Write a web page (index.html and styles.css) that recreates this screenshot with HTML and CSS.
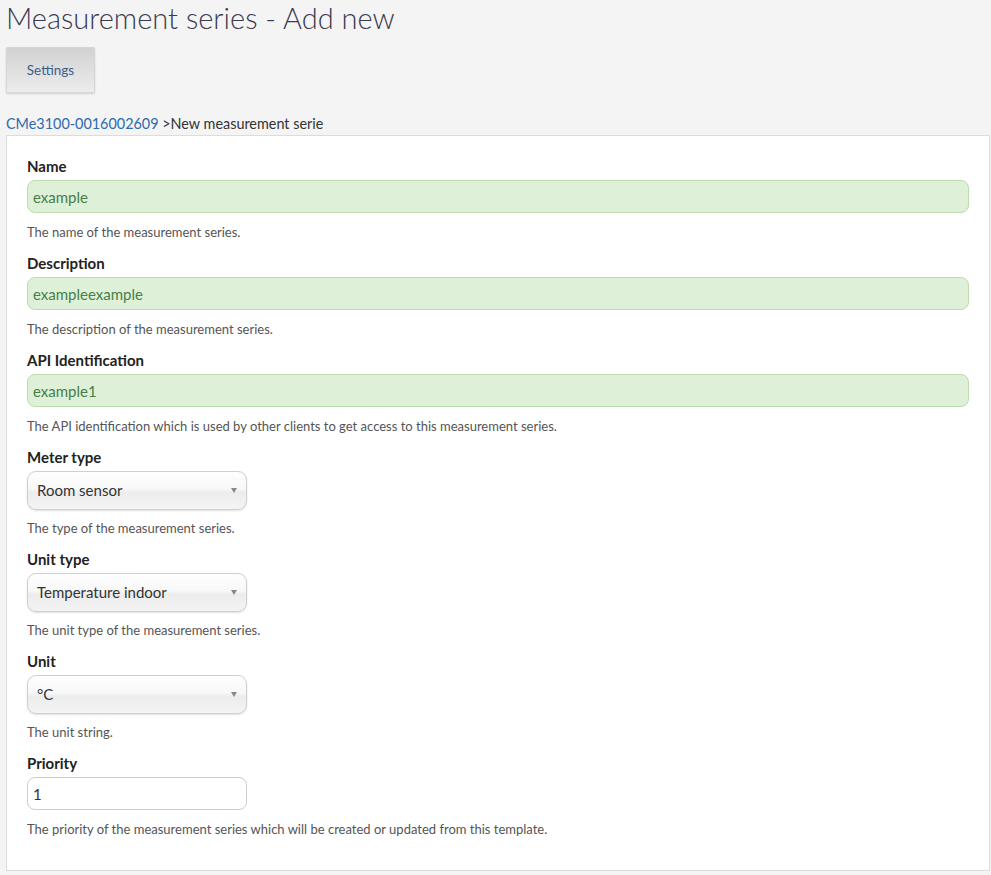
FILE: index.html
```html
<!DOCTYPE html>
<html>
<head>
    <title>Measurement series - Add new</title>
    <meta charset="utf-8">
    <meta name="viewport" content="width=device-width, initial-scale=1">
    <link rel="stylesheet" href="styles.css">
</head>
<body>
    <h1 class="page-title">Measurement series - Add new</h1>
    <div class="toolbar">
        <button class="tool-button">Settings</button>
    </div>
    <div class="breadcrumb">
        <a href="#">CMe3100-0016002609</a> &gt;New measurement serie
    </div>
    <div class="panel">
        <div class="field">
            <label class="field-label">Name</label>
            <input class="text-input valid" type="text" value="example">
            <p class="help">The name of the measurement series.</p>
        </div>
        <div class="field">
            <label class="field-label">Description</label>
            <input class="text-input valid" type="text" value="exampleexample">
            <p class="help">The description of the measurement series.</p>
        </div>
        <div class="field">
            <label class="field-label">API Identification</label>
            <input class="text-input valid" type="text" value="example1">
            <p class="help">The API identification which is used by other clients to get access to this measurement series.</p>
        </div>
        <div class="field">
            <label class="field-label">Meter type</label>
            <div class="select">Room sensor<span class="arrow"></span></div>
            <p class="help">The type of the measurement series.</p>
        </div>
        <div class="field">
            <label class="field-label">Unit type</label>
            <div class="select">Temperature indoor<span class="arrow"></span></div>
            <p class="help">The unit type of the measurement series.</p>
        </div>
        <div class="field">
            <label class="field-label">Unit</label>
            <div class="select">°C<span class="arrow"></span></div>
            <p class="help">The unit string.</p>
        </div>
        <div class="field">
            <label class="field-label">Priority</label>
            <input class="text-input short" type="text" value="1">
            <p class="help">The priority of the measurement series which will be created or updated from this template.</p>
        </div>
    </div>
</body>
</html>
```

FILE: styles.css
```css
body {
    margin: 0;
    padding: 0 0 4px 6px;
    font-family: Lato, "Open Sans", sans-serif;
    background-color: #f4f4f4;
    color: #333;
}
.page-title {
    margin: 0;
    font-size: 29px;
    font-weight: 300;
    line-height: 35px;
    color: #3b3b50;
}
.toolbar {
    margin-top: 12px;
}
.tool-button {
    display: block;
    width: 89px;
    height: 46px;
    padding: 0;
    font-family: inherit;
    font-size: 13.5px;
    color: #3c5e8c;
    background: linear-gradient(#d2d2d2, #ececec);
    border: 1px solid #d6d6d6;
    border-radius: 1px;
    box-shadow: 0 1px 2px rgba(0, 0, 0, 0.15);
    cursor: pointer;
}
.breadcrumb {
    margin-top: 21px;
    font-size: 14.4px;
    line-height: 20px;
    color: #333;
}
.breadcrumb a {
    color: #2e6ab1;
    text-decoration: none;
}
.panel {
    margin-top: 1px;
    margin-right: 1px;
    padding: 20px 20px 33px 20px;
    background-color: #fff;
    border: 1px solid #dcdcdc;
}
.field-label {
    display: block;
    font-size: 15px;
    font-weight: bold;
    line-height: 20px;
    color: #222;
    margin-bottom: 4px;
}
.text-input {
    display: block;
    box-sizing: border-box;
    width: 100%;
    height: 33px;
    padding: 0 5px;
    font-family: inherit;
    font-size: 15px;
    color: #333;
    background-color: #fff;
    border: 1px solid #ccc;
    border-radius: 8px;
}
.text-input.valid {
    background-color: #dff0d8;
    border-color: #bcdcac;
    color: #45804a;
}
.text-input.short {
    width: 220px;
}
.select {
    position: relative;
    box-sizing: border-box;
    width: 220px;
    height: 39px;
    padding: 0 9px;
    font-size: 15px;
    line-height: 37px;
    color: #333;
    background: linear-gradient(#fefefe 0%, #f8f8f8 45%, #ececec 55%, #f4f4f4 100%);
    border: 1px solid #cfcfcf;
    border-radius: 9px;
    box-shadow: 0 1px 2px rgba(0, 0, 0, 0.12);
}
.arrow {
    position: absolute;
    right: 9px;
    top: 16px;
    width: 0;
    height: 0;
    border-left: 3px solid transparent;
    border-right: 3px solid transparent;
    border-top: 5px solid #888;
}
.help {
    margin: 11px 0 13px 0;
    font-size: 13px;
    line-height: 16px;
    color: #555;
}
.select + .help {
    margin-top: 10px;
}
.field:last-child .help {
    margin-bottom: 0;
}
```
